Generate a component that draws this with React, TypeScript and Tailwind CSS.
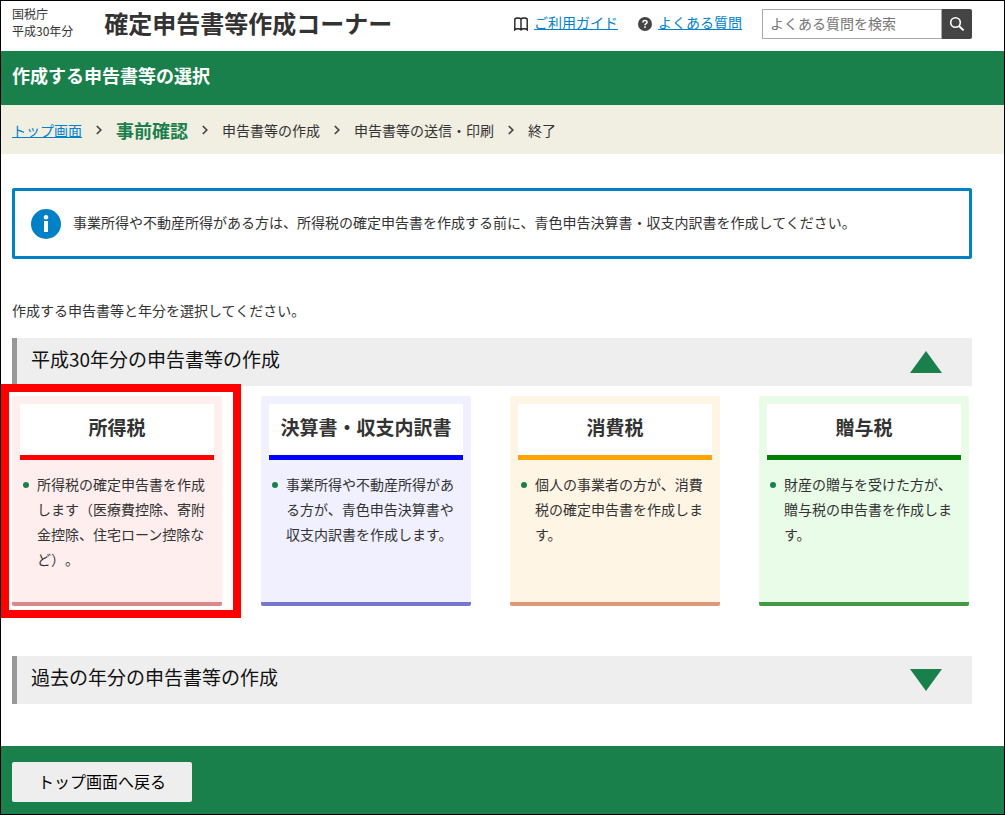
import React, { useState } from 'react';

interface TaxCard {
  title: string;
  description: string;
  cardClass: string;
  titleClass: string;
  selected?: boolean;
}

const CARDS: TaxCard[] = [
  {
    title: '所得税',
    description: '所得税の確定申告書を作成します（医療費控除、寄附金控除、住宅ローン控除など）。',
    cardClass: 'bg-[#ffeeee] border-[#dd8888]',
    titleClass: 'border-[#ff0000]',
    selected: true,
  },
  {
    title: '決算書・収支内訳書',
    description: '事業所得や不動産所得がある方が、青色申告決算書や収支内訳書を作成します。',
    cardClass: 'bg-[#f0f0ff] border-[#7777cc]',
    titleClass: 'border-[#0000ff]',
  },
  {
    title: '消費税',
    description: '個人の事業者の方が、消費税の確定申告書を作成します。',
    cardClass: 'bg-[#fff5e5] border-[#dd9977]',
    titleClass: 'border-[#ffa500]',
  },
  {
    title: '贈与税',
    description: '財産の贈与を受けた方が、贈与税の申告書を作成します。',
    cardClass: 'bg-[#e8fce8] border-[#449944]',
    titleClass: 'border-[#008000]',
  },
];

const STEPS = ['トップ画面', '事前確認', '申告書等の作成', '申告書等の送信・印刷', '終了'];

const BookIcon = () => (
  <svg width="14" height="14" viewBox="0 0 14 14" fill="none" stroke="#222222" strokeWidth="1.4" aria-hidden="true">
    <path d="M7 2C6 0.7 1.8 0.7 0.8 2V12.8C1.8 11.3 6 11.3 7 12.8C8 11.3 12.2 11.3 13.2 12.8V2C12.2 0.7 8 0.7 7 2ZM7 2V12.8" />
  </svg>
);

const QuestionIcon = () => (
  <svg width="14" height="14" viewBox="0 0 14 14" fill="none" aria-hidden="true">
    <circle cx="7" cy="7" r="7" fill="#444444" />
    <path d="M4.9 5.4C4.9 2.9 9.1 2.9 9.1 5.3C9.1 6.7 7 6.7 7 8.3" stroke="#ffffff" strokeWidth="1.5" />
    <rect x="6.2" y="9.3" width="1.6" height="1.6" fill="#ffffff" />
  </svg>
);

const SearchIcon = () => (
  <svg width="16" height="16" viewBox="0 0 16 16" fill="none" stroke="#ffffff" aria-hidden="true">
    <circle cx="6.5" cy="6.5" r="4.8" strokeWidth="1.6" />
    <path d="M10 10L14.6 14.4" strokeWidth="2" />
  </svg>
);

const InfoIcon = () => (
  <svg className="shrink-0" width="30" height="30" viewBox="0 0 30 30" aria-hidden="true">
    <circle cx="15" cy="15" r="15" fill="#0081c6" />
    <circle cx="15" cy="8.2" r="2.2" fill="#ffffff" />
    <rect x="13" y="12" width="4" height="11" fill="#ffffff" />
  </svg>
);

const Chevron = () => (
  <svg className="mx-[14px] shrink-0" width="6" height="10" viewBox="0 0 6 10" fill="none" stroke="#444444" strokeWidth="1.7" aria-hidden="true">
    <path d="M0.8 1L4.8 5L0.8 9" />
  </svg>
);

const SectionBar: React.FC<{ title: string; open: boolean; onClick: () => void }> = ({ title, open, onClick }) => (
  <h2>
    <button
      type="button"
      aria-expanded={open}
      onClick={onClick}
      className="flex w-full h-12 items-center justify-between border-l-[5px] border-[#999999] bg-[#eeeeee] pl-[14px] pr-[30px] text-left text-[19px] leading-6 text-[#111111]"
    >
      <span className="pb-[6px]">{title}</span>
      <svg width="32" height="22" viewBox="0 0 32 22" fill="#1a804b" aria-hidden="true">
        <path d={open ? 'M16 0L32 22H0Z' : 'M0 0H32L16 22Z'} />
      </svg>
    </button>
  </h2>
);

const Card: React.FC<{ card: TaxCard }> = ({ card }) => (
  <li className="relative">
    <a href="#" className={`block h-full min-h-[210px] rounded-[2px] border-b-4 px-2 pt-2 pb-4 ${card.cardClass}`}>
      <h3 className={`border-b-[5px] bg-white pt-[9px] pb-[14px] text-center text-[19px] leading-7 font-bold whitespace-nowrap ${card.titleClass}`}>
        {card.title}
      </h3>
      <div className="flex gap-2 pt-3 pl-[3px]">
        <span className="mt-[10px] h-[6px] w-[6px] shrink-0 rounded-full bg-[#1a804b]" />
        <p className="text-sm leading-[25px]">{card.description}</p>
      </div>
    </a>
    {card.selected && (
      <div className="pointer-events-none absolute -top-3 -bottom-3 -left-[11px] -right-[19px] border-8 border-[#ff0000]" />
    )}
  </li>
);

export default function App() {
  const [currentOpen, setCurrentOpen] = useState(true);
  const [pastOpen, setPastOpen] = useState(false);

  return (
    <div
      lang="ja"
      className="flex min-h-screen flex-col border border-black bg-white font-['Noto_Sans_CJK_JP',sans-serif] text-sm text-[#333333] [text-spacing-trim:space-all]"
    >
      <header className="flex h-[50px] items-center pb-1 pl-[11px] pr-8">
        <p className="pb-1 text-xs leading-[17px] whitespace-nowrap">
          国税庁
          <br />
          平成30年分
        </p>
        <h1 className="ml-[31px] pb-[2px] text-2xl leading-8 font-bold whitespace-nowrap">確定申告書等作成コーナー</h1>
        <nav className="ml-auto flex items-center gap-5 whitespace-nowrap">
          <a href="#" className="flex items-center gap-[6px] text-[#0081cc]">
            <BookIcon />
            <span className="pb-1 underline">ご利用ガイド</span>
          </a>
          <a href="#" className="flex items-center gap-[6px] text-[#0081cc]">
            <QuestionIcon />
            <span className="pb-1 underline">よくある質問</span>
          </a>
        </nav>
        <form className="ml-5 flex" onSubmit={(e) => e.preventDefault()}>
          <input
            type="text"
            aria-label="よくある質問を検索"
            placeholder="よくある質問を検索"
            className="h-[30px] w-[180px] border border-[#aaaaaa] px-[7px] pb-[2px] text-sm placeholder:text-[#757575]"
          />
          <button type="submit" aria-label="検索" className="flex h-[30px] w-[30px] items-center justify-center rounded-r-[2px] bg-[#444444]">
            <SearchIcon />
          </button>
        </form>
      </header>

      <div className="bg-[#1a804b] px-[11px] pt-[10px] pb-4">
        <h2 className="text-lg leading-7 font-bold text-white">作成する申告書等の選択</h2>
      </div>

      <ol className="flex h-[49px] items-center bg-[#f1eee2] px-[11px] whitespace-nowrap">
        {STEPS.map((step, i) => (
          <li key={step} className="flex items-center">
            {i > 0 && <Chevron />}
            {i === 0 && <a href="#" className="text-[#0081cc] underline">{step}</a>}
            {i === 1 && <strong className="text-lg leading-7 text-[#1a804b]">{step}</strong>}
            {i > 1 && <span>{step}</span>}
          </li>
        ))}
      </ol>

      <main className="flex-1 pt-[34px] pb-[42px] pl-[11px] pr-8">
        <div className="flex min-h-[71px] items-center gap-3 rounded-[2px] border-[3px] border-[#0081c6] px-4">
          <InfoIcon />
          <p className="pb-1">事業所得や不動産所得がある方は、所得税の確定申告書を作成する前に、青色申告決算書・収支内訳書を作成してください。</p>
        </div>

        <p className="pt-[39px] pb-4 leading-6">作成する申告書等と年分を選択してください。</p>

        <SectionBar title="平成30年分の申告書等の作成" open={currentOpen} onClick={() => setCurrentOpen(!currentOpen)} />
        {currentOpen && (
          <ul className="mt-[10px] grid grid-cols-4 gap-[39px] pr-[3px]">
            {CARDS.map((card) => (
              <Card key={card.title} card={card} />
            ))}
          </ul>
        )}

        <div className="mt-[50px]">
          <SectionBar title="過去の年分の申告書等の作成" open={pastOpen} onClick={() => setPastOpen(!pastOpen)} />
        </div>
      </main>

      <footer className="bg-[#1a804b] px-[11px] pt-4 pb-3">
        <button type="button" className="h-10 w-[180px] rounded-[2px] bg-[#eeeeee] pb-[2px] text-base text-black">
          トップ画面へ戻る
        </button>
      </footer>
    </div>
  );
}
